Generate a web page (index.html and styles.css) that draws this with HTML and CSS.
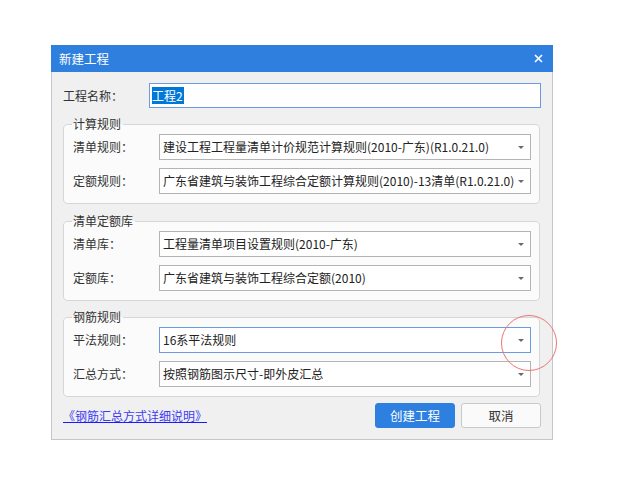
FILE: index.html
```html
<!DOCTYPE html>
<html lang="zh-CN">
<head>
<meta charset="utf-8">
<title>新建工程</title>
<link rel="stylesheet" href="styles.css">
</head>
<body>
<div class="dialog">
  <div class="titlebar">
    <span class="title">新建工程</span>
    <svg class="close" width="9" height="9" viewBox="0 0 9 9"><path d="M1 1 L8 8 M8 1 L1 8" stroke="#fff" stroke-width="1.6" fill="none"/></svg>
  </div>
  <div class="content">
    <div class="row name-row">
      <span class="label">工程名称：</span>
      <div class="input"><span class="sel">工程2</span></div>
    </div>

    <fieldset class="group">
      <legend>计算规则</legend>
      <div class="row">
        <span class="label">清单规则：</span>
        <div class="combo"><span class="val">建设工程工程量清单计价规范计算规则(2010-广东)(R1.0.21.0)</span><span class="arrow"></span></div>
      </div>
      <div class="row">
        <span class="label">定额规则：</span>
        <div class="combo"><span class="val">广东省建筑与装饰工程综合定额计算规则(2010)-13清单(R1.0.21.0)</span><span class="arrow"></span></div>
      </div>
    </fieldset>

    <fieldset class="group">
      <legend>清单定额库</legend>
      <div class="row">
        <span class="label">清单库：</span>
        <div class="combo"><span class="val">工程量清单项目设置规则(2010-广东)</span><span class="arrow"></span></div>
      </div>
      <div class="row">
        <span class="label">定额库：</span>
        <div class="combo"><span class="val">广东省建筑与装饰工程综合定额(2010)</span><span class="arrow"></span></div>
      </div>
    </fieldset>

    <fieldset class="group last">
      <legend>钢筋规则</legend>
      <div class="row">
        <span class="label">平法规则：</span>
        <div class="combo hover"><span class="val">16系平法规则</span><span class="arrow"></span></div>
      </div>
      <div class="row">
        <span class="label">汇总方式：</span>
        <div class="combo"><span class="val">按照钢筋图示尺寸-即外皮汇总</span><span class="arrow"></span></div>
      </div>
    </fieldset>

    <div class="footer">
      <a class="link" href="#">《钢筋汇总方式详细说明》</a>
      <div class="buttons">
        <button class="btn primary">创建工程</button>
        <button class="btn">取消</button>
      </div>
    </div>
  </div>
  <div class="mark"></div>
</div>
</body>
</html>
```

FILE: styles.css
```css
* { box-sizing: border-box; }
html, body { margin: 0; padding: 0; background: #ffffff; }
body {
  font-family: "Noto Sans CJK SC", "Noto Sans", sans-serif;
  font-size: 12px;
  color: #333333;
  width: 633px;
  height: 499px;
  overflow: hidden;
}
.dialog {
  position: relative;
  margin: 45px 0 0 51px;
  width: 502px;
  height: 395px;
  background: #f0f0f0;
  border: 1px solid #c3c6cb;
  border-top: none;
}
.titlebar {
  height: 27px;
  margin: 0 -1px;
  background: #2f80de;
  display: flex;
  align-items: center;
  justify-content: space-between;
  padding: 0 10px 0 8px;
  color: #ffffff;
}
.title { font-size: 12.5px; line-height: 16px; }
.close { display: block; }
.content {
  padding: 11px 11px 0 11px;
  display: flex;
  flex-direction: column;
}
.row {
  display: flex;
  align-items: center;
}
.label {
  width: 86px;
  flex: none;
  line-height: 16px;
  color: #333333;
}
.name-row .input {
  flex: 1;
  height: 25px;
  border: 1px solid #6b9be0;
  background: #ffffff;
  display: flex;
  align-items: center;
  padding-left: 2px;
}
.sel {
  background: #0078d7;
  color: #ffffff;
  line-height: 17px;
  padding: 0 1px 0 0;
}
.group {
  margin: 8px 1px 0 0;
  padding: 2px 8px 9px 9px;
  border: 1px solid #d6d6d6;
  border-radius: 4px;
  background: #fbfbfb;
  min-width: 0;
}
.group + .group { margin-top: 9px; }
.group.last { margin-top: 8px; }
.group legend {
  padding: 0 2px 0 1px;
  margin-left: -1px;
  line-height: 16px;
  font-size: 12px;
  color: #333333;
}
.group .row + .row { margin-top: 8px; }
.combo {
  flex: 1;
  min-width: 0;
  height: 26px;
  border: 1px solid #b4b4b4;
  background: #ffffff;
  display: flex;
  align-items: center;
  padding: 0 6px 0 3px;
  color: #222222;
}
.combo.hover { border-color: #6b9be0; }
.val {
  flex: 1;
  white-space: nowrap;
  overflow: hidden;
  line-height: 16px;
}
.arrow {
  flex: none;
  width: 0;
  height: 0;
  border-left: 3px solid transparent;
  border-right: 3px solid transparent;
  border-top: 3px solid #6a6a6a;
  margin-left: 2px;
}
.footer {
  margin-top: 6px;
  display: flex;
  align-items: center;
  justify-content: space-between;
}
.link {
  color: #3d3df2;
  text-decoration: underline;
  text-decoration-color: #1a1aff;
  line-height: 16px;
}
.buttons {
  display: flex;
  gap: 6px;
}
.btn {
  width: 80px;
  height: 25px;
  border: 1px solid #c9c9c9;
  border-radius: 3px;
  background: #fafafa;
  font-family: inherit;
  font-size: 12.5px;
  color: #333333;
  padding: 0;
}
.btn.primary {
  background: #2e80e0;
  border-color: #2e80e0;
  color: #ffffff;
}
.mark {
  position: absolute;
  left: 449px;
  top: 270px;
  width: 56px;
  height: 56px;
  border: 1px solid #ee7373;
  border-radius: 50%;
  pointer-events: none;
}
```
